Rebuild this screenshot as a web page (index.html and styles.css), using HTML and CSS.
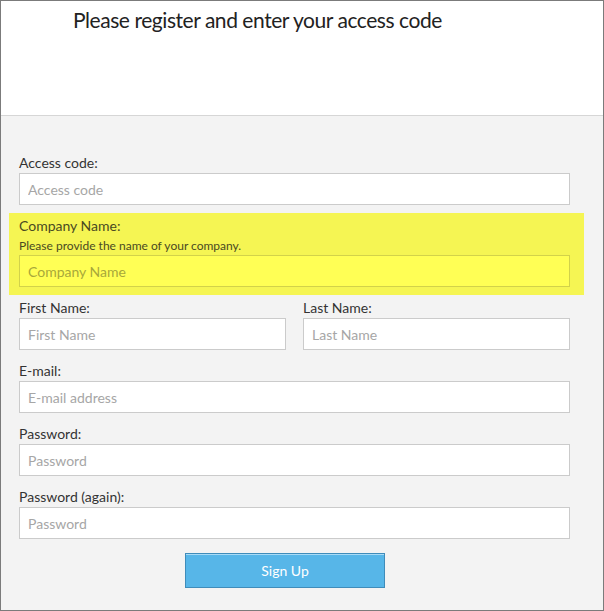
FILE: index.html
```html
<!DOCTYPE html>
<html lang="en">
<head>
<meta charset="utf-8">
<title>Register</title>
<link rel="stylesheet" href="styles.css">
</head>
<body>
<div class="frame">
  <header class="head">
    <h1 class="title">Please register and enter your access code</h1>
  </header>
  <form class="form">
    <div class="group">
      <label class="label">Access code:</label>
      <input class="input" type="text" placeholder="Access code">
    </div>
    <div class="group highlight">
      <label class="label">Company Name:</label>
      <div class="help">Please provide the name of your company.</div>
      <input class="input" type="text" placeholder="Company Name">
    </div>
    <div class="row">
      <div class="group">
        <label class="label">First Name:</label>
        <input class="input" type="text" placeholder="First Name">
      </div>
      <div class="group">
        <label class="label">Last Name:</label>
        <input class="input" type="text" placeholder="Last Name">
      </div>
    </div>
    <div class="group">
      <label class="label">E-mail:</label>
      <input class="input" type="text" placeholder="E-mail address">
    </div>
    <div class="group">
      <label class="label">Password:</label>
      <input class="input" type="password" placeholder="Password">
    </div>
    <div class="group">
      <label class="label">Password (again):</label>
      <input class="input" type="password" placeholder="Password">
    </div>
    <div class="actions">
      <button class="btn" type="button">Sign Up</button>
    </div>
  </form>
</div>
</body>
</html>
```
FILE: styles.css
```css
* { box-sizing: border-box; }
html, body { margin: 0; padding: 0; }
body {
  font-family: Lato, "Open Sans", "DejaVu Sans", sans-serif;
  color: #333;
  background: #fff;
}
.frame {
  width: 604px;
  height: 611px;
  border: 1px solid #7b7b7b;
  background: #f3f3f3;
  display: flex;
  flex-direction: column;
  overflow: hidden;
}
.head {
  height: 115px;
  background: #fff;
  border-bottom: 1px solid #d6d6d6;
  flex: none;
}
.title {
  margin: 0;
  padding: 6px 0 0 72px;
  font-size: 21px;
  line-height: 26px;
  letter-spacing: -0.45px;
  font-weight: 400;
  color: #222;
}
.form {
  padding: 37px 33px 0 18px;
  display: flex;
  flex-direction: column;
}
.group {
  display: flex;
  flex-direction: column;
  margin-bottom: 11px;
}
.label {
  font-size: 14px;
  line-height: 20px;
  color: #333;
}
.input {
  height: 32px;
  width: 100%;
  border: 1px solid #cbcbcb;
  background: #fff;
  font-family: inherit;
  font-size: 14px;
  padding: 0 8px;
  color: #333;
  outline: none;
}
.input::placeholder { color: #a6a6a6; }
.highlight {
  background: #f5f553;
  margin: -3px -14px 3px -10px;
  padding: 3px 14px 8px 10px;
}
.highlight .label { color: #4a4a22; }
.help {
  font-size: 12px;
  line-height: 19px;
  color: #4a4a22;
}
.highlight .input {
  background: #ffff55;
  border-color: #d2d24a;
}
.highlight .input::placeholder { color: #a8a83a; }
.row {
  display: grid;
  grid-template-columns: 1fr 1fr;
  column-gap: 17px;
}
.actions {
  padding: 3px 0 0 166px;
}
.btn {
  width: 200px;
  height: 35px;
  background: #57b6e8;
  border: 1px solid #3f8cba;
  box-shadow: inset 0 1px 0 #a9dbf6;
  color: #fff;
  font-family: inherit;
  font-size: 14px;
  padding: 0;
  cursor: pointer;
}
```
